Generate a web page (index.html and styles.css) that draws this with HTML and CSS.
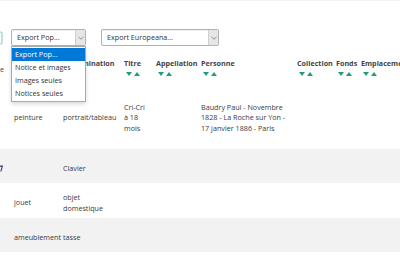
FILE: index.html
```html
<!DOCTYPE html>
<html lang="fr">
<head>
<meta charset="UTF-8" />
<meta name="viewport" content="width=device-width, initial-scale=1" />
<title>Résultats</title>
<link rel="stylesheet" href="styles.css">
</head>
<body>
  <div class="toolbar">
    <svg class="xls-icon" width="11" height="14" viewBox="0 0 11 14">
      <rect x="1" y="1" width="9" height="12" rx="1.5" fill="none" stroke="#8fd3b8" stroke-width="1.2"/>
      <path d="M3 5h5M3 8h5" stroke="#8fd3b8" stroke-width="1"/>
    </svg>
    <div class="select select-pop">
      <span class="select-label">Export Pop...</span>
      <span class="select-arrow">
        <svg width="6" height="4" viewBox="0 0 6 4"><path d="M0.5 0.8 3 3.2 5.5 0.8" fill="none" stroke="#8a8a8a" stroke-width="0.9"/></svg>
      </span>
      <ul class="select-menu">
        <li class="active">Export Pop...</li>
        <li>Notice et images</li>
        <li>Images seules</li>
        <li>Notices seules</li>
      </ul>
    </div>
    <div class="select select-europeana">
      <span class="select-label">Export Europeana...</span>
      <span class="select-arrow">
        <svg width="6" height="4" viewBox="0 0 6 4"><path d="M0.5 0.8 3 3.2 5.5 0.8" fill="none" stroke="#8a8a8a" stroke-width="0.9"/></svg>
      </span>
    </div>
  </div>

  <table class="results">
    <colgroup>
      <col style="width:14px">
      <col style="width:49px">
      <col style="width:61px">
      <col style="width:32px">
      <col style="width:45px">
      <col style="width:96px">
      <col style="width:39px">
      <col style="width:25px">
      <col style="width:39px">
    </colgroup>
    <thead>
      <tr>
        <th class="cut"><span class="cut-e">e</span></th>
        <th>Domaine</th>
        <th>Dénomination</th>
        <th>Titre<div class="sort"><i class="down"></i><i class="up"></i></div></th>
        <th>Appellation<div class="sort"><i class="down"></i><i class="up"></i></div></th>
        <th>Personne<div class="sort"><i class="down"></i><i class="up"></i></div></th>
        <th>Collection<div class="sort"><i class="down"></i><i class="up"></i></div></th>
        <th>Fonds<div class="sort"><i class="down"></i><i class="up"></i></div></th>
        <th>Emplacement<div class="sort"><i class="down"></i><i class="up"></i></div></th>
      </tr>
    </thead>
    <tbody>
      <tr class="row-tall">
        <td class="cut"></td>
        <td>peinture</td>
        <td>portrait/tableau</td>
        <td>Cri-Cri<br>à 18<br>mois</td>
        <td></td>
        <td>Baudry Paul - Novembre<br>1828 - La Roche sur Yon -<br>17 janvier 1886 - Paris</td>
        <td></td><td></td><td></td>
      </tr>
      <tr class="row-grey">
        <td class="cut">
          <svg class="cut-mark" width="3" height="7" viewBox="0 0 3 7"><path d="M0 0.5h3L1.4 6.5H0.3L1.6 1.8H0z" fill="#2b3a5c"/></svg>
        </td>
        <td></td>
        <td>Clavier</td>
        <td></td><td></td><td></td><td></td><td></td><td></td>
      </tr>
      <tr class="row-white">
        <td class="cut"></td>
        <td>jouet</td>
        <td>objet<br>domestique</td>
        <td></td><td></td><td></td><td></td><td></td><td></td>
      </tr>
      <tr class="row-grey">
        <td class="cut"></td>
        <td>ameublement</td>
        <td>tasse</td>
        <td></td><td></td><td></td><td></td><td></td><td></td>
      </tr>
      <tr class="row-white">
        <td class="cut"></td>
        <td></td><td></td><td></td><td></td><td></td><td></td><td></td><td></td>
      </tr>
    </tbody>
  </table>
</body>
</html>
```

FILE: styles.css
```css
* {
  box-sizing: border-box;
}

body {
  margin: 0;
  font-family: 'Open Sans', 'Noto Sans', sans-serif;
  font-size: 7.2px;
  color: #3a3a3a;
  background: #fff;
  border-top: 1px solid #eef4f2;
  overflow: hidden;
}

/* export bar */
.toolbar {
  display: flex;
  align-items: center;
  margin-left: -8px;
  padding-top: 28px;
  height: 45px;
}

.xls-icon {
  flex: none;
  margin-right: 8px;
}

.select {
  position: relative;
  display: flex;
  height: 17px;
  border: 1px solid #b2b2b2;
  border-radius: 2px;
  background: #fff;
  box-shadow: inset 0 1px 1px rgba(0,0,0,0.06);
}

.select-pop {
  width: 75px;
  margin-right: 15px;
}

.select-europeana {
  width: 118px;
}

.select-label {
  flex: 1;
  padding-left: 5px;
  line-height: 15px;
  color: #333;
}

.select-arrow {
  width: 10px;
  display: flex;
  align-items: center;
  justify-content: center;
  background: #e6e6e6;
  border-left: 1px solid #cfcfcf;
}

.select-menu {
  position: absolute;
  top: 16px;
  left: -1px;
  width: 75px;
  margin: 0;
  padding: 1px 0;
  list-style: none;
  background: #fff;
  border: 1px solid #a9a9a9;
  box-shadow: 0 2px 4px rgba(0,0,0,0.15);
  z-index: 2;
}

.select-menu li {
  height: 13px;
  line-height: 13px;
  padding-left: 3px;
  color: #333;
}

.select-menu li.active {
  background: #0078d7;
  color: #fff;
}

/* results table */
.results {
  table-layout: fixed;
  border-collapse: collapse;
  width: 400px;
  margin-top: 8px;
}

.results th {
  height: 32px;
  padding: 4px 0 0;
  vertical-align: top;
  text-align: left;
  font-weight: 700;
  color: #444;
  white-space: nowrap;
  overflow: hidden;
  line-height: 10px;
}

.results td {
  padding: 0;
  vertical-align: middle;
  line-height: 10.5px;
  white-space: nowrap;
  overflow: hidden;
}

.results .cut-e {
  display: block;
  margin-top: 6px;
  font-weight: 400;
}

.cut-mark {
  display: block;
}

.sort {
  display: flex;
  gap: 2px;
  margin-top: 4px;
  padding-left: 2px;
}

.sort i {
  width: 0;
  height: 0;
  border-left: 3px solid transparent;
  border-right: 3px solid transparent;
}

.sort .down {
  border-top: 4px solid #1f9e78;
}

.sort .up {
  border-bottom: 4px solid #1f9e78;
}

.row-tall {
  height: 63px;
}

.row-grey {
  height: 34px;
  background: #f2f2f2;
}

.row-white {
  height: 35px;
  background: #fff;
}

.row-grey td,
.row-white td {
  padding-top: 4px;
}
```
